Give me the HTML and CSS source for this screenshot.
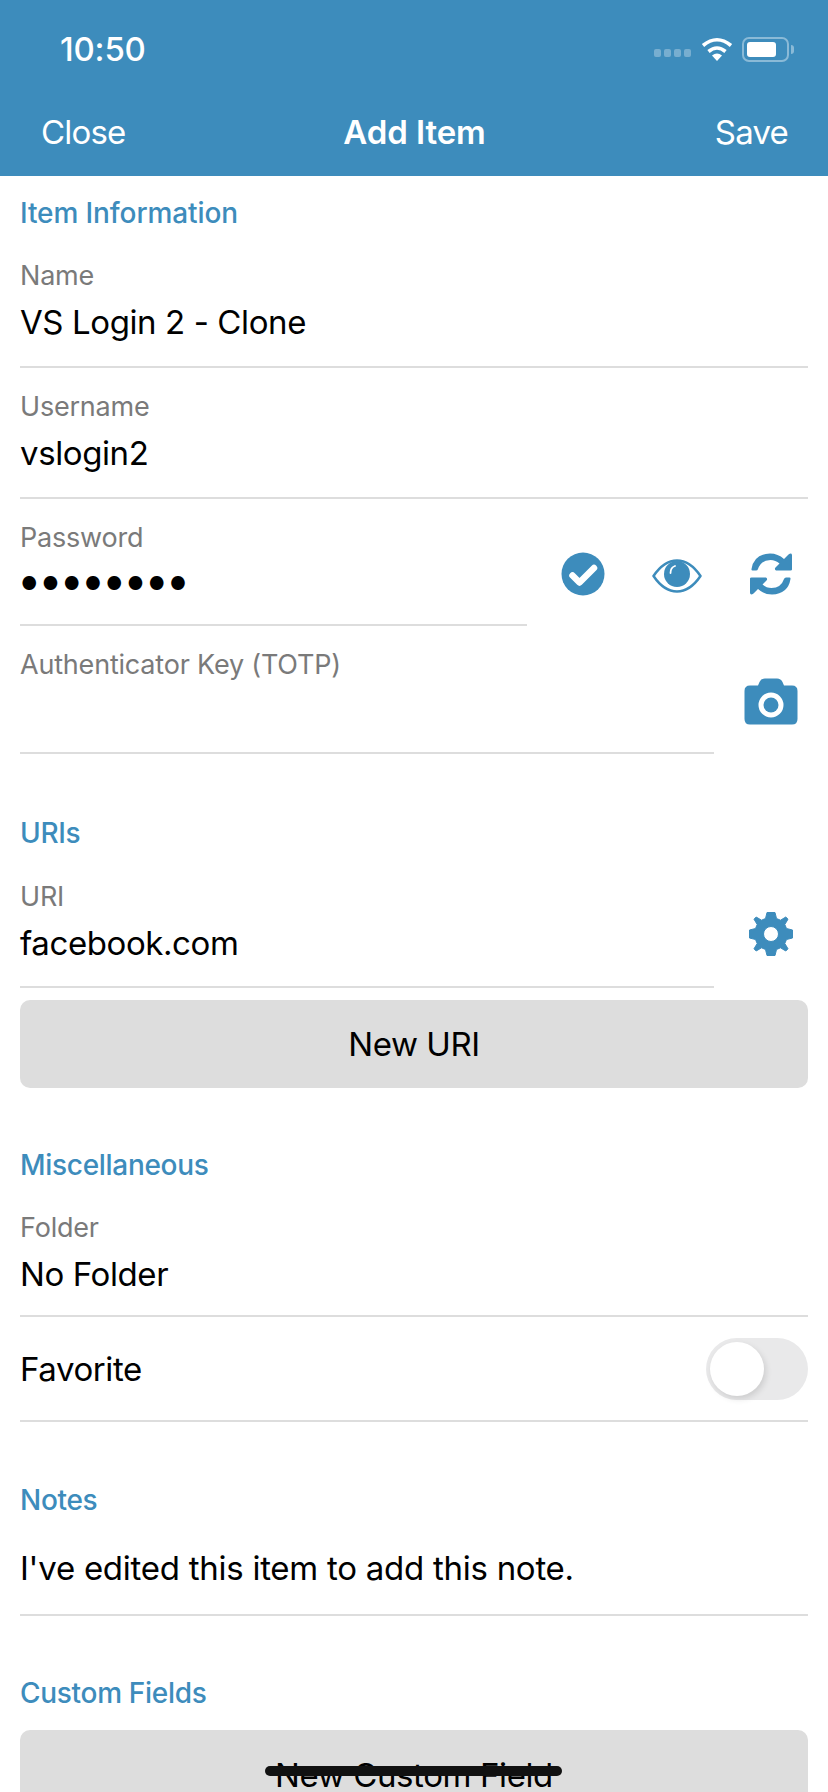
FILE: index.html
```html
<!DOCTYPE html>
<html lang="en">
<head>
    <meta charset="UTF-8">
    <meta name="viewport" content="width=device-width, initial-scale=1.0">
    <title>Add Item</title>
    <link rel="stylesheet" href="styles.css">
</head>
<body>
    <header class="top">
        <div class="status">
            <span class="clock">10:50</span>
            <div class="status-icons">
                <span class="dots"><i></i><i></i><i></i><i></i></span>
                <svg class="wifi" width="32" height="24" viewBox="0 0 32 24">
                    <path d="M16 24 L11 18.5 Q16 14.5 21 18.5 Z" fill="#fff"/>
                    <path d="M7.5 14.5 Q16 7.5 24.5 14.5" fill="none" stroke="#fff" stroke-width="3.6"/>
                    <path d="M2 8.5 Q16 -3 30 8.5" fill="none" stroke="#fff" stroke-width="3.6"/>
                </svg>
                <span class="battery"><span class="battery-fill"></span></span>
                <span class="battery-cap"></span>
            </div>
        </div>
        <nav class="navbar">
            <span>Close</span>
            <span class="nav-title">Add Item</span>
            <span class="nav-save">Save</span>
        </nav>
    </header>

    <main class="form">
        <h2 class="section first">Item Information</h2>
        <div class="field">
            <label>Name</label>
            <div class="value">VS Login 2 - Clone</div>
        </div>
        <div class="field">
            <label>Username</label>
            <div class="value">vslogin2</div>
        </div>
        <div class="field-row">
            <div class="field password">
                <label>Password</label>
                <div class="value dots-value">●●●●●●●●</div>
            </div>
            <div class="actions three">
                <span class="cell">
                    <svg width="44" height="44" viewBox="0 0 44 44">
                        <circle cx="22" cy="22" r="21.5" fill="#3d8cbc"/>
                        <path d="M11.5 23.5 L18.5 30.5 L33 16" fill="none" stroke="#fff" stroke-width="6.5" stroke-linejoin="round" stroke-linecap="round"/>
                    </svg>
                </span>
                <span class="cell eye">
                    <svg width="50" height="34" viewBox="0 0 50 34">
                        <path d="M1.5 17 Q12 1.5 25 1.5 Q38 1.5 48.500 17 Q38 32.500 25 32.500 Q12 32.500 1.500 17 Z" fill="none" stroke="#3d8cbc" stroke-width="2.500" stroke-linejoin="round"/>
                        <circle cx="25" cy="15" r="13" fill="#3d8cbc"/>
                        <path d="M18.500 14 Q18.500 8.500 23 7" fill="none" stroke="#fff" stroke-width="1.800" stroke-linecap="round"/>
                    </svg>
                </span>
                <span class="cell">
                    <svg width="44" height="44" viewBox="0 0 44 44">
                        <path d="M2.500 17 Q5 2 21 1.500 Q29 1.500 35 7 L39.500 2.500 Q42.500 0.500 43 3 L43 17.500 Q43 18.500 41.500 18.500 L27 18.500 Q25 17.500 26.500 15.500 L30.500 11.500 Q26.500 8 21.500 8 Q12 8 9 17 Q8.500 18.500 7 18.500 L3.500 18.500 Q2.300 18.500 2.500 17 Z" fill="#3d8cbc"/>
                        <path d="M41.500 27 Q39 42 23 42.500 Q15 42.500 9 37 L4.500 41.500 Q1.500 43.500 1 41 L1 26.500 Q1 25.500 2.500 25.500 L17 25.500 Q19 26.500 17.500 28.500 L13.500 32.500 Q17.500 36 22.500 36 Q32 36 35 27 Q35.500 25.500 37 25.500 L40.500 25.500 Q41.700 25.500 41.500 27 Z" fill="#3d8cbc"/>
                    </svg>
                </span>
            </div>
        </div>
        <div class="field-row">
            <div class="field short totp">
                <label>Authenticator Key (TOTP)</label>
                <div class="value">&nbsp;</div>
            </div>
            <div class="actions one camera">
                <svg width="54" height="47" viewBox="0 0 54 47">
                    <path fill-rule="evenodd" d="M6 7.500 H14 L15.500 4 Q17 0.500 21 0.500 H33 Q37 0.500 38.500 4 L40 7.500 H48 Q53.500 7.500 53.500 13 V41 Q53.500 46.500 48 46.500 H6 Q0.500 46.500 0.500 41 V13 Q0.500 7.500 6 7.500 Z M27 14.500 A12.500 12.500 0 1 0 27 39.500 A12.500 12.500 0 1 0 27 14.500 Z" fill="#3d8cbc"/>
                    <circle cx="27" cy="27" r="7.500" fill="#3d8cbc"/>
                </svg>
            </div>
        </div>

        <h2 class="section uris">URIs</h2>
        <div class="field-row">
            <div class="field short uri">
                <label>URI</label>
                <div class="value">facebook.com</div>
            </div>
            <div class="actions one gear">
                <svg width="44" height="44" viewBox="0 0 44 44">
                    <path fill-rule="evenodd" d="M18 0.500 H26 L27.500 6.500 L31.500 8.200 L36.800 5 L39 7.200 L35.800 12.500 L37.500 16.500 L43.500 18 V26 L37.500 27.500 L35.800 31.500 L39 36.800 L36.800 39 L31.500 35.800 L27.500 37.500 L26 43.500 H18 L16.500 37.500 L12.500 35.800 L7.200 39 L5 36.800 L8.200 31.500 L6.500 27.500 L0.500 26 V18 L6.500 16.500 L8.200 12.500 L5 7.200 L7.200 5 L12.500 8.200 L16.500 6.500 Z M22 14.500 A7.500 7.500 0 1 0 22 29.500 A7.500 7.500 0 1 0 22 14.500 Z" fill="#3d8cbc" stroke="#3d8cbc" stroke-linejoin="round"/>
                </svg>
            </div>
        </div>
        <button class="btn uri-btn" type="button">New URI</button>

        <h2 class="section misc-head">Miscellaneous</h2>
        <div class="field folder">
            <label>Folder</label>
            <div class="value">No Folder</div>
        </div>
        <div class="toggle-row">
            <span>Favorite</span>
            <span class="toggle"><span class="knob"></span></span>
        </div>

        <h2 class="section notes-head">Notes</h2>
        <div class="notes">I've edited this item to add this note.</div>

        <h2 class="section custom-head">Custom Fields</h2>
        <div class="btn custom-btn">
            <span class="custom-label">New Custom Field<span class="strike"></span></span>
        </div>
    </main>
</body>
</html>
```

FILE: styles.css
```css
* {
    box-sizing: border-box;
}

html, body {
    margin: 0;
    height: 1792px;
    overflow: hidden;
}

body {
    font-family: Inter, "Liberation Sans", sans-serif;
    background-color: #fff;
    color: #000;
}

.top {
    background-color: #3d8cbc;
    color: #fff;
    height: 176px;
    padding-top: 27px;
}

.status {
    display: flex;
    justify-content: space-between;
    align-items: center;
    height: 44px;
    padding: 0 34px 0 60px;
}

.clock {
    font-size: 33px;
    font-weight: 500;
    letter-spacing: -0.2px;
}

.status-icons {
    display: flex;
    align-items: center;
}

.dots {
    display: flex;
    gap: 3px;
    margin: 8px 10px 0 0;
}

.dots i {
    width: 7px;
    height: 8px;
    border-radius: 2px;
    background: rgba(255, 255, 255, 0.3);
}

.battery {
    display: block;
    width: 47px;
    height: 25px;
    margin-left: 9px;
    padding: 3px;
    border: 2px solid rgba(255, 255, 255, 0.4);
    border-radius: 7px;
}

.battery-fill {
    display: block;
    width: 29px;
    height: 15px;
    background: #fff;
    border-radius: 3px;
}

.battery-cap {
    width: 3px;
    height: 9px;
    margin-left: 2px;
    background: rgba(255, 255, 255, 0.4);
    border-radius: 0 3px 3px 0;
}

.navbar {
    display: grid;
    grid-template-columns: 1fr auto 1fr;
    align-items: center;
    height: 44px;
    margin-top: 39px;
    padding: 0 40px 0 41px;
    font-size: 33px;
    letter-spacing: -0.8px;
}

.nav-title {
    font-weight: 600;
    letter-spacing: -0.1px;
}

.nav-save {
    text-align: right;
}

.form {
    padding: 0 20px;
}

.section {
    margin: 0;
    padding-top: 60px;
    height: 100px;
    font-size: 28px;
    font-weight: 500;
    line-height: 32px;
    letter-spacing: -0.3px;
    color: #3d8cbc;
}

.section.first {
    padding-top: 21px;
    height: 61px;
    letter-spacing: -0.1px;
}

.section.uris {
    padding-top: 63px;
    height: 104px;
}

.section.misc-head {
    padding-top: 61px;
    height: 101px;
}

.section.notes-head {
    padding-top: 62px;
}

.section.custom-head {
    padding-top: 61px;
    height: 114px;
}

.field {
    height: 131px;
    padding-top: 24px;
    border-bottom: 2px solid #ddd;
}

label {
    display: block;
    font-size: 27px;
    line-height: 30px;
    letter-spacing: -0.2px;
    color: #7a7a7a;
}

.value {
    margin-top: 11px;
    font-size: 33px;
    line-height: 40px;
    letter-spacing: -0.4px;
}

.field-row {
    display: flex;
    justify-content: space-between;
    align-items: flex-start;
}

.password {
    width: 507px;
    height: 127px;
}

.short {
    width: 694px;
}

.totp {
    height: 128px;
}

.uri {
    height: 130px;
}

.folder {
    height: 128px;
}

.dots-value {
    margin-top: 11px;
    padding-left: 1px;
    font-size: 18px;
    letter-spacing: 4.8px;
}

.actions {
    display: flex;
    align-items: center;
    justify-content: center;
    height: 100px;
    margin-right: -10px;
}

.actions.three {
    width: 282px;
    padding-top: 50px;
}

.actions.one {
    width: 94px;
}

.actions.camera {
    padding-top: 50px;
}

.actions.gear {
    padding-top: 52px;
}

.cell {
    display: flex;
    justify-content: center;
    width: 94px;
}

.cell.eye {
    margin-top: 3px;
}

.btn {
    display: flex;
    justify-content: center;
    align-items: center;
    width: 100%;
    height: 88px;
    border: none;
    border-radius: 10px;
    background-color: #ddd;
    color: #000;
    font-family: inherit;
    font-size: 33px;
    letter-spacing: -0.4px;
}

.uri-btn {
    margin-top: 12px;
}

.toggle-row {
    display: flex;
    justify-content: space-between;
    align-items: center;
    height: 105px;
    border-bottom: 2px solid #ddd;
    font-size: 33px;
    letter-spacing: -0.4px;
}

.toggle {
    display: block;
    width: 102px;
    height: 62px;
    padding: 4px;
    border-radius: 31px;
    background-color: #e9e9ea;
}

.knob {
    display: block;
    width: 54px;
    height: 54px;
    border-radius: 50%;
    background: #fff;
    box-shadow: 2px 3px 6px rgba(0, 0, 0, 0.12);
}

.notes {
    height: 94px;
    padding-top: 26px;
    border-bottom: 2px solid #ddd;
    font-size: 33px;
    line-height: 40px;
    letter-spacing: -0.26px;
}

.custom-btn {
    align-items: flex-start;
    height: 120px;
    padding-top: 25px;
}

.custom-label {
    position: relative;
    line-height: 40px;
}

.strike {
    position: absolute;
    left: -10px;
    right: -9px;
    top: 11px;
    height: 10px;
    border-radius: 5px;
    background: #111;
}
```
